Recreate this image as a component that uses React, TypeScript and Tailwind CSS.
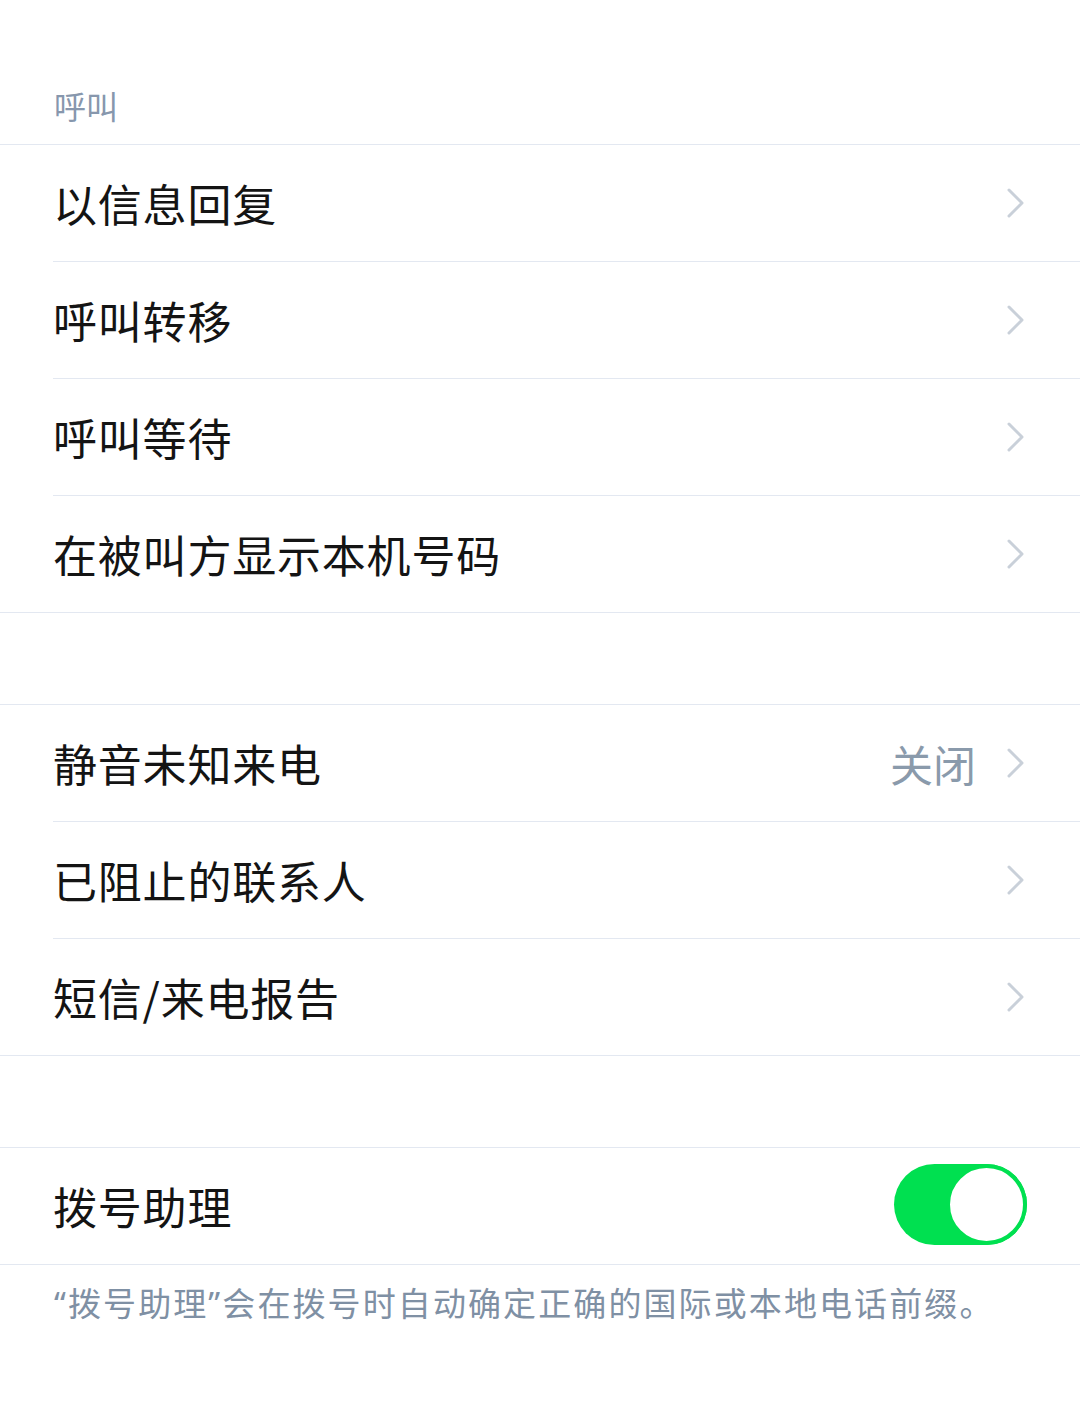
const font = "font-['Noto_Sans_CJK_SC','Noto_Sans',sans-serif]";

function Chevron() {
  return (
    <svg width="20" height="32" viewBox="0 0 20 32" className="shrink-0">
      <polyline
        points="3,3 16,16 3,29"
        fill="none"
        stroke="#c9d0d9"
        strokeWidth="3"
        strokeLinecap="round"
        strokeLinejoin="round"
      />
    </svg>
  );
}

interface RowProps {
  label: string;
  value?: string;
  last?: boolean;
}

function Row({ label, value, last }: RowProps) {
  return (
    <div className="pl-[53px]">
      <div
        className={`flex items-center pr-[54px] ${last ? "h-[116px]" : "h-[117px] border-b border-[#e3e8f1]"}`}
      >
        <span className="flex-1 text-[44px] leading-none tracking-[0.8px] text-[#141414]">{label}</span>
        {value && <span className="mr-[30px] text-[43px] leading-none text-[#8a9aab]">{value}</span>}
        <Chevron />
      </div>
    </div>
  );
}

function Group({ rows }: { rows: RowProps[] }) {
  return (
    <div className="border-y border-[#e3e8f1]">
      {rows.map((r, i) => (
        <Row key={r.label} {...r} last={i === rows.length - 1} />
      ))}
    </div>
  );
}

export default function App() {
  return (
    <div className={`min-h-[1409px] w-[1080px] bg-white ${font}`}>
      <div className="flex h-[144px] items-end pb-[23px] pl-[54px]">
        <span className="text-[32px] leading-none text-[#8797ad]">呼叫</span>
      </div>
      <Group
        rows={[
          { label: "以信息回复" },
          { label: "呼叫转移" },
          { label: "呼叫等待" },
          { label: "在被叫方显示本机号码" },
        ]}
      />
      <div className="h-[91px]" />
      <Group
        rows={[
          { label: "静音未知来电", value: "关闭" },
          { label: "已阻止的联系人" },
          { label: "短信/来电报告" },
        ]}
      />
      <div className="h-[91px]" />
      <div className="border-y border-[#e3e8f1]">
        <div className="flex h-[116px] items-center pr-[53px] pl-[53px]">
          <span className="flex-1 text-[44px] leading-none tracking-[0.8px] text-[#141414]">拨号助理</span>
          <div className="relative -mt-[3px] h-[81px] w-[133px] rounded-full bg-[#00e050]">
            <div className="absolute top-0 right-0 h-[81px] w-[81px] rounded-full border-[4px] border-[#00e050] bg-white" />
          </div>
        </div>
      </div>
      <div className="pt-[21px] pl-[54px]">
        <p className="text-[33px] leading-none tracking-[2.1px] text-[#7f90a4]">
          <span className="font-['Noto_Sans',sans-serif]">“</span>拨号助理
          <span className="font-['Noto_Sans',sans-serif]">”</span>会在拨号时自动确定正确的国际或本地电话前缀。
        </p>
      </div>
    </div>
  );
}
